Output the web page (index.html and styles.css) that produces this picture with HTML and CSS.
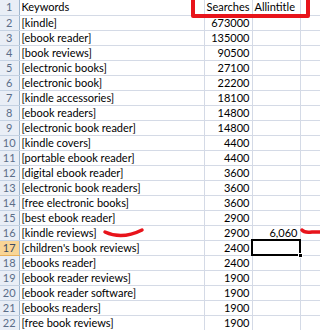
FILE: index.html
```
<!DOCTYPE html>
<html>
<head>
<meta charset="utf-8">
<link rel="stylesheet" href="styles.css">
</head>
<body>
<div class="sheet">
<table class="grid">
<colgroup><col class="c-hd"><col class="c-a"><col class="c-b"><col class="c-c"><col class="c-d"></colgroup>
<tbody>
<tr><th>1</th><td>Keywords</td><td>Searches</td><td>Allintitle</td><td></td></tr>
<tr><th>2</th><td>[kindle]</td><td class="num">673000</td><td></td><td></td></tr>
<tr><th>3</th><td>[ebook reader]</td><td class="num">135000</td><td></td><td></td></tr>
<tr><th>4</th><td>[book reviews]</td><td class="num">90500</td><td></td><td></td></tr>
<tr><th>5</th><td>[electronic books]</td><td class="num">27100</td><td></td><td></td></tr>
<tr><th>6</th><td>[electronic book]</td><td class="num">22200</td><td></td><td></td></tr>
<tr><th>7</th><td>[kindle accessories]</td><td class="num">18100</td><td></td><td></td></tr>
<tr><th>8</th><td>[ebook readers]</td><td class="num">14800</td><td></td><td></td></tr>
<tr><th>9</th><td>[electronic book reader]</td><td class="num">14800</td><td></td><td></td></tr>
<tr><th>10</th><td>[kindle covers]</td><td class="num">4400</td><td></td><td></td></tr>
<tr><th>11</th><td>[portable ebook reader]</td><td class="num">4400</td><td></td><td></td></tr>
<tr><th>12</th><td>[digital ebook reader]</td><td class="num">3600</td><td></td><td></td></tr>
<tr><th>13</th><td>[electronic book readers]</td><td class="num">3600</td><td></td><td></td></tr>
<tr><th>14</th><td>[free electronic books]</td><td class="num">3600</td><td></td><td></td></tr>
<tr><th>15</th><td>[best ebook reader]</td><td class="num">2900</td><td></td><td></td></tr>
<tr><th>16</th><td>[kindle reviews]</td><td class="num">2900</td><td class="num">6,060</td><td></td></tr>
<tr class="active"><th>17</th><td>[children's book reviews]</td><td class="num">2400</td><td class="sel"><span class="handle"></span></td><td></td></tr>
<tr><th>18</th><td>[ebooks reader]</td><td class="num">2400</td><td></td><td></td></tr>
<tr><th>19</th><td>[ebook reader reviews]</td><td class="num">1900</td><td></td><td></td></tr>
<tr><th>20</th><td>[ebook reader software]</td><td class="num">1900</td><td></td><td></td></tr>
<tr><th>21</th><td>[ebooks readers]</td><td class="num">1900</td><td></td><td></td></tr>
<tr><th>22</th><td>[free book reviews]</td><td class="num">1900</td><td></td><td></td></tr>
</tbody>
</table>
<svg class="marks" width="320" height="330" viewBox="0 0 320 330">
<path d="M193 0 V16 H308 V0" fill="none" stroke="#e8141b" stroke-width="4" stroke-linejoin="round"/>
<path d="M105 232 Q122 240 142 230" fill="none" stroke="#e8141b" stroke-width="3.5" stroke-linecap="round"/>
<path d="M302 230 Q304 233 312 232 L322 232" fill="none" stroke="#e8141b" stroke-width="3.5" stroke-linecap="round"/>
</svg>
</div>
</body>
</html>
```
FILE: styles.css
```
html, body { margin: 0; padding: 0; background: #fff; }
body { width: 320px; height: 330px; overflow: hidden; }
.sheet { position: relative; width: 320px; height: 330px; overflow: hidden; }
.grid {
  border-collapse: collapse;
  table-layout: fixed;
  width: 340px;
  font-family: Lato, "Liberation Sans", sans-serif;
  font-size: 11px;
  color: #000;
}
.c-hd { width: 19px; }
.c-a { width: 185px; }
.c-b { width: 48px; }
.c-c { width: 48px; }
.c-d { width: 40px; }
.grid tr { height: 15px; }
.grid th, .grid td {
  height: 14px;
  padding: 0 2px;
  line-height: 14px;
  border-right: 1px solid #d4dae6;
  border-bottom: 1px solid #d4dae6;
  white-space: nowrap;
  overflow: visible;
  text-align: left;
  font-weight: normal;
}
.grid th {
  background: #e9eef6;
  color: #5b6d88;
  text-align: center;
  padding: 0;
  border-right: 1px solid #9eb6ce;
  border-bottom: 1px solid #c5d2e3;
}
.grid tr.active th {
  background: #f8d596;
  color: #3b4b63;
  border-bottom-color: #e8b05a;
}
.grid td.num { text-align: right; }
.grid td.sel {
  position: relative;
  outline: 2px solid #000;
  outline-offset: -1px;
}
.handle {
  position: absolute;
  right: -3px;
  bottom: -3px;
  width: 5px;
  height: 5px;
  background: #000;
  border: 1px solid #fff;
  box-sizing: border-box;
}
.marks { position: absolute; left: 0; top: 0; pointer-events: none; }
```
